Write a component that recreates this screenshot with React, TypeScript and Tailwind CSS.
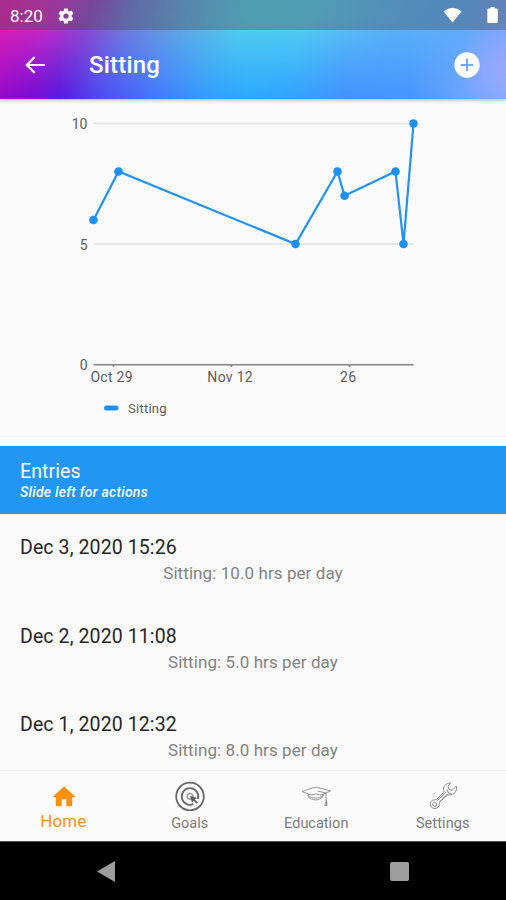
import React from "react";

const entries = [
  { date: "Dec 3, 2020 15:26", value: "Sitting: 10.0 hrs per day" },
  { date: "Dec 2, 2020 11:08", value: "Sitting: 5.0 hrs per day" },
  { date: "Dec 1, 2020 12:32", value: "Sitting: 8.0 hrs per day" },
];

const points = [
  [93.5, 121],
  [118.5, 72.5],
  [295.5, 145],
  [337.5, 72.5],
  [344.5, 96.7],
  [395.5, 72.5],
  [403.5, 145],
  [413.5, 24.5],
];

function Header() {
  return (
    <header className="relative z-10 h-[99px] shrink-0 text-white shadow-[0_1px_4px_rgba(0,0,0,0.3)] bg-[linear-gradient(to_right,#960acb_0px,#7c0cd4_30px,#5a1ae0_60px,#4d50f4_105px,#447cff_160px,#349cfd_205px,#2caaff_250px,#32a2ff_300px,#4492ff_345px,#4896ff_410px,#68a4ff_460px,#7cacff_506px)]">
      <div className="absolute inset-0 bg-[linear-gradient(105deg,#e020b4_10px,#c830c8_55px,#9048cc_90px,#6f80dc_130px,#62a8e4_180px,#56ceee_240px,#56cef2_300px,#5cb4f8_385px,#5cacf8_450px,#80a0fa_506px)] [mask-image:linear-gradient(to_bottom,black_20%,transparent_98%)]" />
      <div className="absolute inset-0 bg-[radial-gradient(circle_at_506px_70px,#98a8fc_0px,transparent_50px)]" />
      <div className="relative flex h-[30px] items-center bg-[#444]/35 pl-[10px]">
        <span className="w-[47px] pt-[2px] text-[17px] leading-none">8:20</span>
        <svg className="mt-px h-[18px] w-[18px]" viewBox="0 0 24 24" fill="currentColor">
          <path d="M19.4 13c.1-.3.1-.7.1-1s0-.7-.1-1l2.2-1.7c.2-.2.3-.5.1-.7l-2-3.5c-.1-.2-.4-.3-.7-.2l-2.5 1c-.5-.4-1.1-.7-1.7-1l-.4-2.6c0-.3-.2-.4-.5-.4h-4c-.2 0-.5.2-.5.4L9 4.900c-.6.3-1.200.6-1.700 1l-2.500-1c-.2-.1-.5 0-.6.2l-2 3.500c-.1.2-.1.5.1.700L4.500 11c0 .3-.1.7-.1 1s0 .7.1 1l-2.200 1.700c-.2.2-.2.5-.1.700l2 3.500c.1.2.4.3.6.2l2.500-1c.5.4 1.100.7 1.700 1l.4 2.600c0 .3.3.4.5.4h4c.3 0 .5-.2.5-.4l.4-2.600c.6-.3 1.200-.6 1.700-1l2.500 1c.2.1.5 0 .6-.2l2-3.500c.1-.2.1-.5-.1-.7zM12 15.500a3.500 3.500 0 1 1 0-7 3.500 3.500 0 0 1 0 7z" />
        </svg>
        <svg className="ml-auto mr-[25px] h-4 w-[19px]" viewBox="0 0 19 16" fill="currentColor">
          <path d="M.5 4.500Q9.500-2.800 18.500 4.500L9.500 15.500z" />
        </svg>
        <svg className="mr-[8px] h-4 w-[11px]" viewBox="0 0 11 16" fill="currentColor">
          <path d="M3.500 0h4v1.500h2q1.300 0 1.300 1.300v12q0 1.200-1.300 1.200h-8Q.3 16 .3 14.800v-12q0-1.300 1.200-1.300h2z" />
        </svg>
      </div>
      <div className="relative flex h-[69px] items-center pl-[22px] pr-[23px]">
        <svg className="h-[26px] w-[26px]" viewBox="0 0 24 24" fill="currentColor">
          <path d="M21 11H6.800l5.600-5.600L11 4l-8 8 8 8 1.400-1.400L6.800 13H21z" />
        </svg>
        <h1 className="ml-[41px] mt-px text-[24px] font-medium leading-none tracking-[0.2px]">Sitting</h1>
        <svg className="ml-auto h-8 w-8" viewBox="0 0 24 24" fill="currentColor">
          <path d="M12 2.500a9.500 9.500 0 1 0 0 19 9.500 9.500 0 0 0 0-19zm4.700 10.300h-3.900v3.900h-1.600v-3.900H7.300v-1.600h3.900V7.300h1.600v3.900h3.900z" />
        </svg>
      </div>
    </header>
  );
}

function Chart() {
  return (
    <svg className="h-[337px] w-full shrink-0" viewBox="0 0 506 337" fontSize="14" fill="#5c5c5c">
      <path d="M93.500 24.500h320M93.500 145h320" stroke="#e2e2e2" strokeWidth="1.500" />
      <path d="M93.500 265.700h320M113.500 265v3M231.500 265v3M349.500 265v3" stroke="#858585" strokeWidth="1.600" />
      <g textAnchor="end">
        <text x="87.500" y="30">10</text>
        <text x="87.500" y="150.500">5</text>
        <text x="87.500" y="271">0</text>
      </g>
      <g textAnchor="middle" letterSpacing="0.3">
        <text x="111.700" y="283">Oct 29</text>
        <text x="230.200" y="283">Nov 12</text>
        <text x="348.200" y="283">26</text>
      </g>
      <polyline points={points.map((p) => p.join(",")).join(" ")} fill="none" stroke="#2192f0" strokeWidth="2.200" />
      {points.map(([x, y]) => (
        <circle key={x} cx={x} cy={y} r="4.300" fill="#1c90f3" />
      ))}
      <rect x="104" y="306.500" width="14.500" height="5" rx="2.500" fill="#1c90f3" />
      <text x="128" y="313.500" fontSize="13" letterSpacing="0.250">Sitting</text>
    </svg>
  );
}

function GoalIcon() {
  return (
    <svg className="h-[30px] w-[30px]" viewBox="0 0 30 30" fill="none" stroke="#686868" strokeWidth="1.800">
      <circle cx="15" cy="15.500" r="13.800" />
      <path d="M18.500 23a8.300 8.300 0 1 1 4.400-5" />
      <circle cx="15" cy="15.300" r="2.900" stroke="#a0a0a0" strokeWidth="1.500" />
      <path d="m15 14.800 2 7.200 1.600-2.200 3 3 1.200-1.200-3-3 2.300-1.600z" fill="#606060" stroke="none" />
    </svg>
  );
}

function EducationIcon() {
  return (
    <svg className="h-[30px] w-[32px]" viewBox="0 0 32 30" fill="none" stroke="#8a8a8a" strokeWidth="0.900" strokeLinejoin="round">
      <path d="M2 10.500 12 7q4-1 8 0l10.500 3-9.500 4q-5-2-10 0z" />
      <path d="M8 12.800v2.700c4 4.500 11 4.500 15 0v-2.500M8 14.500c4 3.500 11 3.500 15 0" />
      <path d="M17.500 10l8.500 2v7.500M26 19.500l-1.200 5h2.200l-.5-5v5" />
    </svg>
  );
}

function WrenchIcon() {
  return (
    <svg className="h-[30px] w-[30px]" viewBox="0 0 30 30" fill="none" stroke="#8a8a8a" strokeWidth="1" strokeLinejoin="round">
      <path d="M22.500 2c-4.500 0-8 3.700-6.700 8 .1.700 0 1-.5 1.600L9 18c-.8.700-1.500.8-2.500.8-2.900 0-4.700 2.600-4.200 5.200.6 3 4.200 4.400 6.700 2.900 2-1.200 2.300-2.600 2.400-4.400.1-1 .5-1.700 1.200-2.300l6.500-5.700c.7-.6 1.300-.6 2.200-.6 4.700.3 8.300-4 7.100-8.800l-4.400 4.400-3.200-1.300-.7-3z" />
      <path d="m9.500 19.500 8.500-8.500M11.500 21l8.500-8.500M19 8.500l1.500 3.500 3 .5" />
      <path d="m4.700 22.500 1.700-1.200 1.900.9.200 2-1.700 1.200-1.900-.8z" />
    </svg>
  );
}

function BottomNav() {
  return (
    <nav className="grid h-[71px] shrink-0 grid-cols-4 border-t border-[#eeeeee] bg-[#fbfbfb] text-[14.500px] text-[#7c7c7c]">
      <div className="flex flex-col items-center pt-[12px] text-[#ff8f0c]">
        <svg className="ml-px h-[28px] w-[28px]" viewBox="0 0 24 24" fill="currentColor">
          <path d="M10 20v-6h4v6h5v-8h3L12 3 2 12h3v8z" />
        </svg>
        <span className="mt-px text-[17px] leading-[18px] tracking-[0.1px]">Home</span>
      </div>
      <div className="flex flex-col items-center pt-[10px]">
        <GoalIcon />
        <span className="mt-[4px] leading-[18px]">Goals</span>
      </div>
      <div className="flex flex-col items-center pt-[10px]">
        <EducationIcon />
        <span className="mt-[4px] leading-[18px]">Education</span>
      </div>
      <div className="flex flex-col items-center pt-[10px]">
        <WrenchIcon />
        <span className="mt-[4px] leading-[18px] tracking-[0.1px]">Settings</span>
      </div>
    </nav>
  );
}

export default function App() {
  return (
    <div className="flex h-[900px] w-[506px] flex-col overflow-hidden bg-[#fafafa] font-[Roboto,sans-serif]">
      <Header />
      <Chart />
      <div className="h-[10px] shrink-0 border-t border-[#f4f4f4] bg-[#fdfdfd]" />
      <section className="h-[68px] shrink-0 bg-[#2196f3] pl-[20px] pt-[15px] text-white">
        <h2 className="text-[19.500px] leading-[22px] tracking-[0.1px]">Entries</h2>
        <p className="text-[14px] font-medium italic leading-[18px] tracking-[0.25px]">Slide left for actions</p>
      </section>
      <main className="min-h-0 flex-1 overflow-hidden">
        {entries.map((entry) => (
          <article key={entry.date} className="h-[88.500px] pt-[22px]">
            <div className="pl-[20px] text-[19.500px] leading-[24px] tracking-[0.1px] text-[#262626]">{entry.date}</div>
            <div className="mt-[2px] text-center text-[17px] leading-[22px] tracking-[0.08px] text-[#828282]">{entry.value}</div>
          </article>
        ))}
      </main>
      <BottomNav />
      <footer className="grid h-[59px] shrink-0 grid-cols-[106px_1fr_107px] items-center border-t border-[#555] bg-black">
        <svg className="h-[21px] w-[18px] justify-self-end translate-x-[9px]" viewBox="0 0 18 21">
          <path d="M18 0v21L0 10.500z" fill="#9d9d9d" />
        </svg>
        <span />
        <span className="-ml-[9px] h-[19px] w-[19px] rounded-[2px] bg-[#9d9d9d]" />
      </footer>
    </div>
  );
}
